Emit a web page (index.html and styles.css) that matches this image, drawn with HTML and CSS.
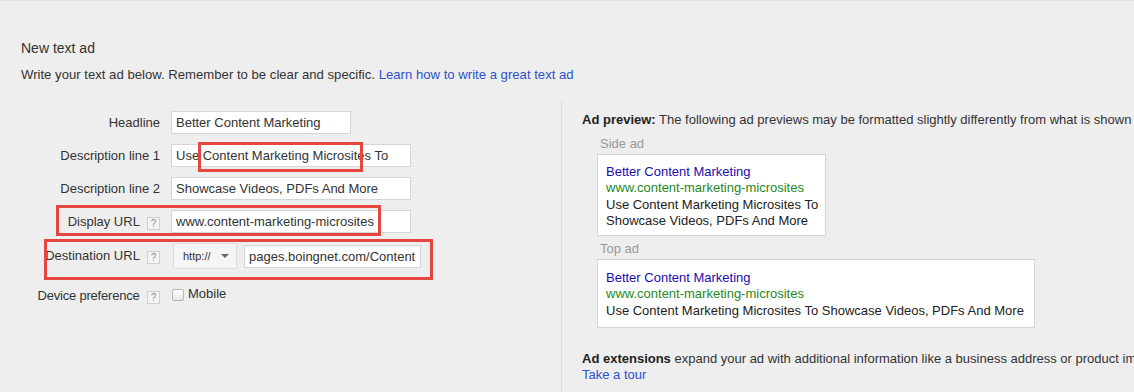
FILE: index.html
```html
<!DOCTYPE html>
<html lang="en">
<head>
    <meta charset="UTF-8">
    <title>New text ad</title>
    <link rel="stylesheet" href="styles.css">
</head>
<body>
    <div class="page">
        <h1 class="title">New text ad</h1>
        <p class="intro">Write your text ad below. Remember to be clear and specific. <a href="#">Learn how to write a great text ad</a></p>

        <div class="columns">
            <div class="form-col">
                <div class="row">
                    <label class="label">Headline</label>
                    <input class="field field-short" type="text" value="Better Content Marketing">
                </div>
                <div class="row">
                    <label class="label">Description line 1</label>
                    <input class="field" type="text" value="Use Content Marketing Microsites To">
                </div>
                <div class="row">
                    <label class="label">Description line 2</label>
                    <input class="field" type="text" value="Showcase Videos, PDFs And More">
                </div>
                <div class="row">
                    <label class="label">Display URL <span class="help">?</span></label>
                    <input class="field" type="text" value="www.content-marketing-microsites">
                </div>
                <div class="row row-dest">
                    <label class="label">Destination URL <span class="help">?</span></label>
                    <div class="select">http://<span class="caret"></span></div>
                    <input class="field field-url" type="text" value="pages.boingnet.com/Content-Marketing-Microsites">
                </div>
                <div class="row row-device">
                    <label class="label">Device preference <span class="help">?</span></label>
                    <span class="checkbox"></span>
                    <span class="check-text">Mobile</span>
                </div>
            </div>

            <div class="preview-col">
                <p class="preview-note"><strong>Ad preview:</strong> The following ad previews may be formatted slightly differently from what is shown to users.</p>

                <div class="ad-label">Side ad</div>
                <div class="ad ad-side">
                    <div class="ad-title">Better Content Marketing</div>
                    <div class="ad-url">www.content-marketing-microsites</div>
                    <div>Use Content Marketing Microsites To</div>
                    <div>Showcase Videos, PDFs And More</div>
                </div>

                <div class="ad-label">Top ad</div>
                <div class="ad ad-top">
                    <div class="ad-title">Better Content Marketing</div>
                    <div class="ad-url">www.content-marketing-microsites</div>
                    <div>Use Content Marketing Microsites To Showcase Videos, PDFs And More</div>
                </div>

                <p class="extensions"><strong>Ad extensions</strong> expand your ad with additional information like a business address or product images.<br><a href="#">Take a tour</a></p>
            </div>
        </div>
    </div>

    <!-- red highlight boxes drawn over the form -->
    <div class="mark mark-desc"></div>
    <div class="mark mark-display"></div>
    <div class="mark mark-dest"></div>
</body>
</html>
```

FILE: styles.css
```css
body {
    margin: 0;
    background: #eeeeee;
    border-top: 1px solid #e4e4e4;
    font-family: 'Liberation Sans', Arial, sans-serif;
    font-size: 13px;
    color: #333;
    overflow: hidden;
}

a {
    color: #2a52cc;
    text-decoration: none;
}

.page {
    padding: 39px 0 0 21px;
}

.title {
    margin: 0;
    font-size: 14px;
    font-weight: normal;
    line-height: 17px;
    color: #333;
}

.intro {
    margin: 10px 0 0;
    line-height: 16px;
    font-size: 13.15px;
}

.columns {
    display: flex;
    margin-top: 18px;
}

.form-col {
    width: 540px;
    padding-top: 10px;
    border-right: 1px solid #dcdcdc;
    height: 300px;
}

.row {
    display: flex;
    align-items: center;
    height: 23px;
    margin-bottom: 10px;
}

.label {
    width: 139px;
    margin-right: 11px;
    text-align: right;
    white-space: nowrap;
}

.help {
    display: inline-block;
    width: 11px;
    height: 11px;
    margin-left: 4px;
    border: 1px solid #cfcfcf;
    background: #f4f4f4;
    color: #8c8c8c;
    font-size: 10px;
    line-height: 11px;
    text-align: center;
    vertical-align: -1px;
}

.field {
    box-sizing: border-box;
    width: 240px;
    height: 23px;
    padding: 0 4px;
    border: 1px solid #d6d6d6;
    background: #fff;
    font-family: 'Liberation Sans', Arial, sans-serif;
    font-size: 13px;
    color: #333;
    outline: none;
}

.field-short {
    width: 180px;
}

.row-dest {
    height: 26px;
    margin-top: 9px;
}

.select {
    box-sizing: border-box;
    display: flex;
    align-items: center;
    justify-content: space-between;
    width: 64px;
    height: 26px;
    margin-left: 2px;
    padding: 0 7px 0 9px;
    border: 1px solid #dcdcdc;
    border-radius: 2px;
    background: #f5f5f5;
    font-size: 11px;
    color: #333;
}

.caret {
    width: 0;
    height: 0;
    border-left: 4px solid transparent;
    border-right: 4px solid transparent;
    border-top: 4px solid #666;
}

.field-url {
    width: 177px;
    margin-left: 7px;
}

.row-device {
    height: 15px;
    margin-top: 20px;
    align-items: flex-start;
}

.row-device .label {
    margin-top: -1px;
    letter-spacing: -0.2px;
}

.checkbox {
    box-sizing: border-box;
    width: 12px;
    height: 12px;
    margin: 0 4px 0 1px;
    border: 1px solid #b5b5b5;
    border-radius: 2px;
    background: linear-gradient(#fff, #e8e8e8);
}

.check-text {
    line-height: 15px;
    margin-top: -3px;
}

.preview-col {
    flex: 1;
    min-width: 0;
    padding: 11px 0 0 20px;
}

.preview-note {
    margin: 0;
    line-height: 16px;
    white-space: nowrap;
}

.preview-note strong,
.extensions strong {
    color: #222;
}

.ad-label {
    margin: 8px 0 0 18px;
    line-height: 16px;
    color: #999;
}

.ad {
    margin: 2px 0 0 15px;
    padding: 9px 8px 6px;
    border: 1px solid #d4d4d4;
    background: #fff;
    line-height: 16.3px;
    color: #222;
    white-space: nowrap;
}

.ad-side {
    width: 211px;
}

.ad-top {
    width: 420px;
    padding-top: 10px;
    padding-bottom: 8px;
}

.ad-side + .ad-label {
    margin-top: 5px;
}

.ad-title {
    color: #1a0dab;
}

.ad-url {
    color: #1e8a1e;
}

.extensions {
    margin: 23px 0 0;
    line-height: 16px;
    white-space: nowrap;
}

.mark {
    position: absolute;
    box-sizing: border-box;
    border: 3px solid #e5463f;
}

.mark-desc {
    left: 198px;
    top: 142px;
    width: 165px;
    height: 30px;
}

.mark-display {
    left: 56px;
    top: 205px;
    width: 325px;
    height: 31px;
}

.mark-dest {
    left: 44px;
    top: 239px;
    width: 389px;
    height: 41px;
}
```
